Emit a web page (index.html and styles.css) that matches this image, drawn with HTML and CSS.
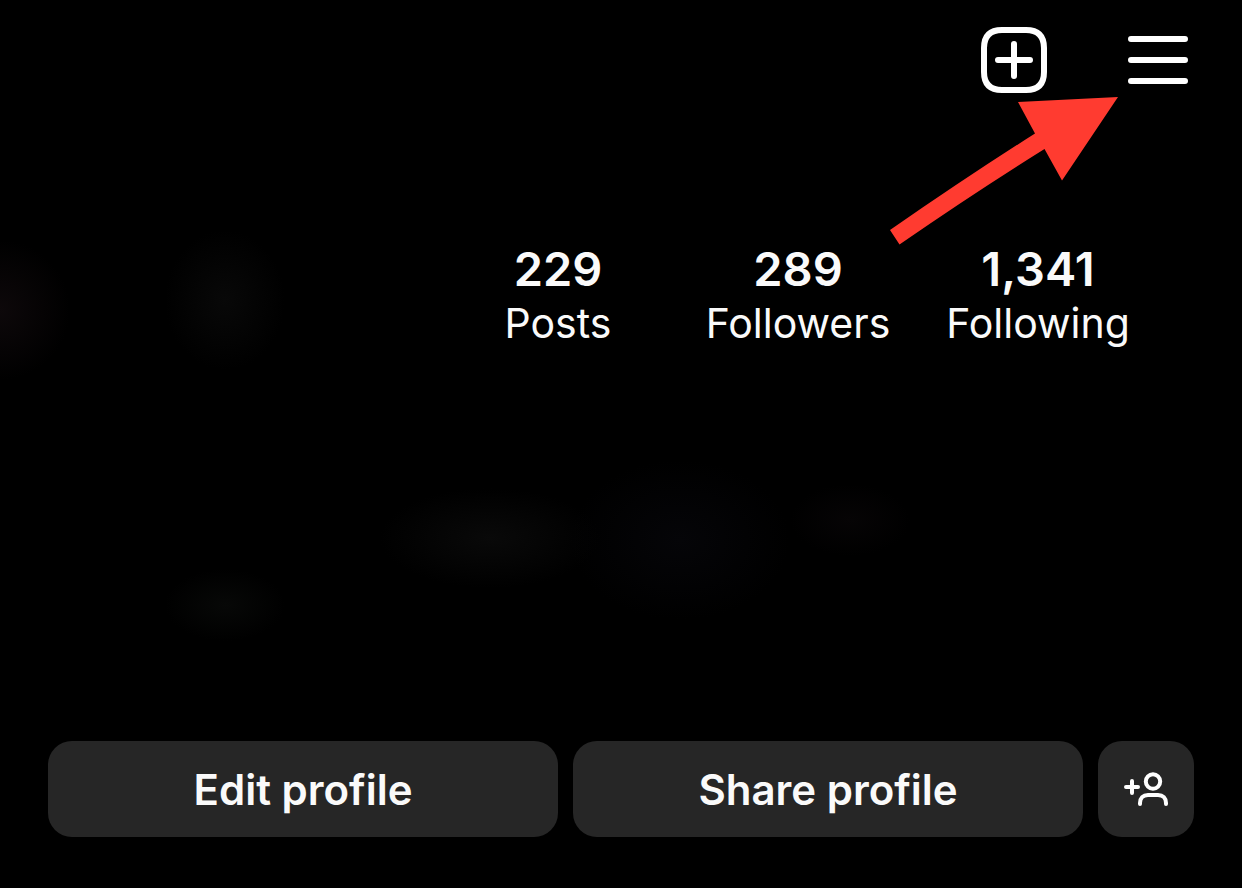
FILE: index.html
```html
<!DOCTYPE html>
<html lang="en">
<head>
<meta charset="utf-8">
<meta name="viewport" content="width=device-width, initial-scale=1">
<title>Profile</title>
<link rel="stylesheet" href="styles.css">
</head>
<body>
<main class="profile">
  <header class="topbar">
    <button class="icon-button" type="button" aria-label="Create">
      <svg class="icon" width="66" height="66" viewBox="0 0 66 66" aria-hidden="true">
        <path d="M21 3H45C57 3 63 9 63 21V45C63 57 57 63 45 63H21C9 63 3 57 3 45V21C3 9 9 3 21 3Z"/>
        <path d="M33 17V49M17 33H49"/>
      </svg>
    </button>
    <button class="icon-button" type="button" aria-label="Menu">
      <svg class="icon" width="60" height="66" viewBox="0 0 60 66" aria-hidden="true">
        <path d="M3 12H57M3 33H57M3 54H57"/>
      </svg>
    </button>
  </header>

  <ul class="stats">
    <li class="stat"><strong class="stat-value">229</strong><span class="stat-label">Posts</span></li>
    <li class="stat"><strong class="stat-value">289</strong><span class="stat-label">Followers</span></li>
    <li class="stat"><strong class="stat-value">1,341</strong><span class="stat-label">Following</span></li>
  </ul>

  <div class="actions">
    <button class="action action-wide" type="button">Edit profile</button>
    <button class="action action-wide" type="button">Share profile</button>
    <button class="action action-square" type="button" aria-label="Discover people">
      <svg class="icon icon-person" width="48" height="40" viewBox="0 0 48 40" aria-hidden="true">
        <path d="M10 12V24M4 18H16"/>
        <circle cx="31" cy="12.500" r="7.200"/>
        <path d="M18 35V34C18 29 21 26 26 26H36C41 26 44 29 44 34V35"/>
      </svg>
    </button>
  </div>

  <svg class="pointer" width="228" height="148" viewBox="0 0 228 148" aria-hidden="true">
    <path d="M0 133Q78 79 145 36.500L128 5L228 0L172 83.500L154.500 52Q84 96 9.500 147.500Z"/>
  </svg>
</main>
</body>
</html>
```

FILE: styles.css
```css
* {
  box-sizing: border-box;
}

body {
  margin: 0;
  background: #000;
  color: #fafafa;
  font-family: Inter, "Liberation Sans", sans-serif;
}

button {
  border: 0;
  padding: 0;
  color: inherit;
  font: inherit;
  cursor: pointer;
}

.profile {
  position: relative;
  display: flex;
  flex-direction: column;
  min-height: 100vh;
  padding: 27px 48px 51px;
  background:
    radial-gradient(ellipse 70px 70px at 0 310px, #0d080a, transparent),
    radial-gradient(ellipse 60px 70px at 225px 300px, #080808, transparent),
    radial-gradient(ellipse 110px 50px at 490px 538px, #090909, transparent),
    radial-gradient(ellipse 110px 80px at 680px 540px, #050508, transparent),
    radial-gradient(ellipse 60px 36px at 850px 520px, #060405, transparent),
    radial-gradient(ellipse 60px 36px at 225px 605px, #070807, transparent),
    #000;
}

.topbar {
  display: flex;
  justify-content: flex-end;
  gap: 81px;
  padding-right: 6px;
}

.icon-button {
  background: none;
}

.icon {
  display: block;
  fill: none;
  stroke: #fff;
  stroke-width: 6;
  stroke-linecap: round;
  stroke-linejoin: round;
}

.icon-person {
  stroke-width: 4;
}

.stats {
  display: flex;
  justify-content: flex-end;
  margin: 149px 0 48px;
  padding: 0 36px 0 0;
  list-style: none;
}

.stat {
  display: flex;
  flex-direction: column;
  flex: 0 1 240px;
  align-items: center;
  line-height: 54px;
}

.stat-value {
  font-size: 47px;
  font-weight: 600;
}

.stat-label {
  font-size: 41px;
}

.actions {
  display: flex;
  gap: 15px;
  margin-top: auto;
}

.action {
  display: flex;
  align-items: center;
  justify-content: center;
  height: 96px;
  border-radius: 24px;
  background: #262626;
  font-size: 42px;
  font-weight: 600;
}

.action-wide {
  flex: 1;
}

.action-square {
  flex: 0 0 96px;
}

.pointer {
  position: absolute;
  top: 97px;
  right: 124px;
  fill: #ff3b30;
}
```
